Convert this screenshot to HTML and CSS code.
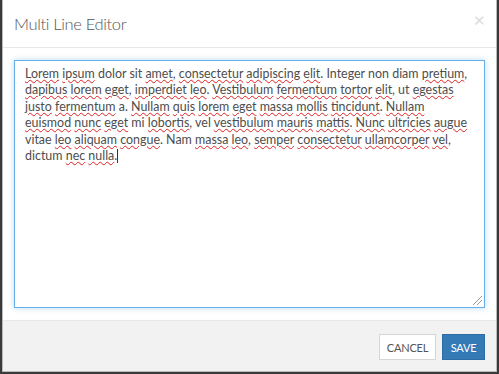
FILE: index.html
```html
<!DOCTYPE html>
<html lang="en">
<head>
    <meta charset="UTF-8">
    <title>Multi Line Editor</title>
    <link rel="stylesheet" href="styles.css">
</head>
<body>
    <div class="dialog">
        <div class="dialog-header">
            <h1>Multi Line Editor</h1>
            <span class="close">&times;</span>
        </div>
        <div class="dialog-body">
            <div class="editor">
                <span class="sp">Lorem</span> <span class="sp">ipsum</span> dolor sit <span class="sp">amet</span>, <span class="sp">consectetur</span> <span class="sp">adipiscing</span> <span class="sp">elit</span>. Integer non diam <span class="sp">pretium</span>,<br>
                <span class="sp">dapibus</span> <span class="sp">lorem</span> <span class="sp">eget</span>, <span class="sp">imperdiet</span> <span class="sp">leo</span>. <span class="sp">Vestibulum</span> <span class="sp">fermentum</span> <span class="sp">tortor</span> <span class="sp">elit</span>, ut <span class="sp">egestas</span><br>
                <span class="sp">justo</span> <span class="sp">fermentum</span> a. <span class="sp">Nullam</span> <span class="sp">quis</span> <span class="sp">lorem</span> <span class="sp">eget</span> <span class="sp">massa</span> <span class="sp">mollis</span> <span class="sp">tincidunt</span>. <span class="sp">Nullam</span><br>
                <span class="sp">euismod</span> <span class="sp">nunc</span> <span class="sp">eget</span> mi <span class="sp">lobortis</span>, vel <span class="sp">vestibulum</span> <span class="sp">mauris</span> <span class="sp">mattis</span>. <span class="sp">Nunc</span> <span class="sp">ultricies</span> <span class="sp">augue</span><br>
                vitae <span class="sp">leo</span> <span class="sp">aliquam</span> <span class="sp">congue</span>. Nam <span class="sp">massa</span> <span class="sp">leo</span>, <span class="sp">semper</span> <span class="sp">consectetur</span> <span class="sp">ullamcorper</span> <span class="sp">vel</span>,<br>
                dictum <span class="sp">nec</span> <span class="sp">nulla</span>.<span class="caret"></span>
                <span class="grip"></span>
            </div>
        </div>
        <div class="dialog-footer">
            <button class="btn btn-cancel">Cancel</button>
            <button class="btn btn-primary">Save</button>
        </div>
    </div>
</body>
</html>
```

FILE: styles.css
```css
/* Base */
html, body {
    margin: 0;
    padding: 0;
    height: 100%;
}

body {
    background-color: #3a3a3a;
    font-family: Lato, "Open Sans", Arial, sans-serif;
    padding: 0 2px 2px 2px;
    box-sizing: border-box;
}

.dialog {
    height: 100%;
    background-color: #fff;
    border: 1px solid #b9b9b9;
    border-top: none;
    box-sizing: border-box;
    display: flex;
    flex-direction: column;
}

.dialog-header {
    flex-shrink: 0;
    height: 47px;
    border-bottom: 1px solid #e8e8e8;
    display: flex;
    align-items: center;
    justify-content: space-between;
    padding: 0 11px;
}

.dialog-header h1 {
    margin: 0;
    font-size: 16.5px;
    font-weight: 300;
    letter-spacing: -0.35px;
    color: #555;
    padding-top: 1px;
}

.close {
    font-size: 20px;
    color: #dcdcdc;
    line-height: 1;
    margin-bottom: 10px;
}

.dialog-body {
    flex: 1;
    min-height: 0;
    padding: 12px 11px 13px 11px;
}

.editor {
    position: relative;
    height: 248px;
    box-sizing: border-box;
    border: 1px solid #66afe9;
    box-shadow: 0 0 6px rgba(102, 175, 233, 0.45);
    padding: 5px 10px;
    font-size: 12.45px;
    line-height: 16.4px;
    color: #4d4d4d;
    white-space: nowrap;
}

.sp {
    text-decoration: underline wavy #e02020;
    text-decoration-thickness: 1px;
    text-underline-offset: 1px;
}

.caret {
    display: inline-block;
    width: 1px;
    height: 14px;
    background-color: #333;
    vertical-align: -3px;
}

.grip {
    position: absolute;
    right: 2px;
    bottom: 2px;
    width: 9px;
    height: 9px;
    background: linear-gradient(135deg, transparent 45%, #999 45%, #999 52%, transparent 52%, transparent 70%, #999 70%, #999 77%, transparent 77%);
}

.dialog-footer {
    flex-shrink: 0;
    border-top: 1px solid #e8e8e8;
    background-color: #f2f2f2;
    padding: 13px 11px 11px 11px;
    display: flex;
    justify-content: flex-end;
    gap: 6px;
}

.btn {
    height: 26px;
    padding: 0;
    font-family: inherit;
    font-size: 11px;
    letter-spacing: -0.2px;
    text-transform: uppercase;
    color: #555;
    background-color: #fff;
    border: 1px solid #d6d6d6;
    border-radius: 0;
    cursor: pointer;
}

.btn-cancel {
    width: 57px;
}

.btn-primary {
    width: 43px;
    background-color: #337ab7;
    border-color: #2e6da4;
    color: #fff;
}
```
